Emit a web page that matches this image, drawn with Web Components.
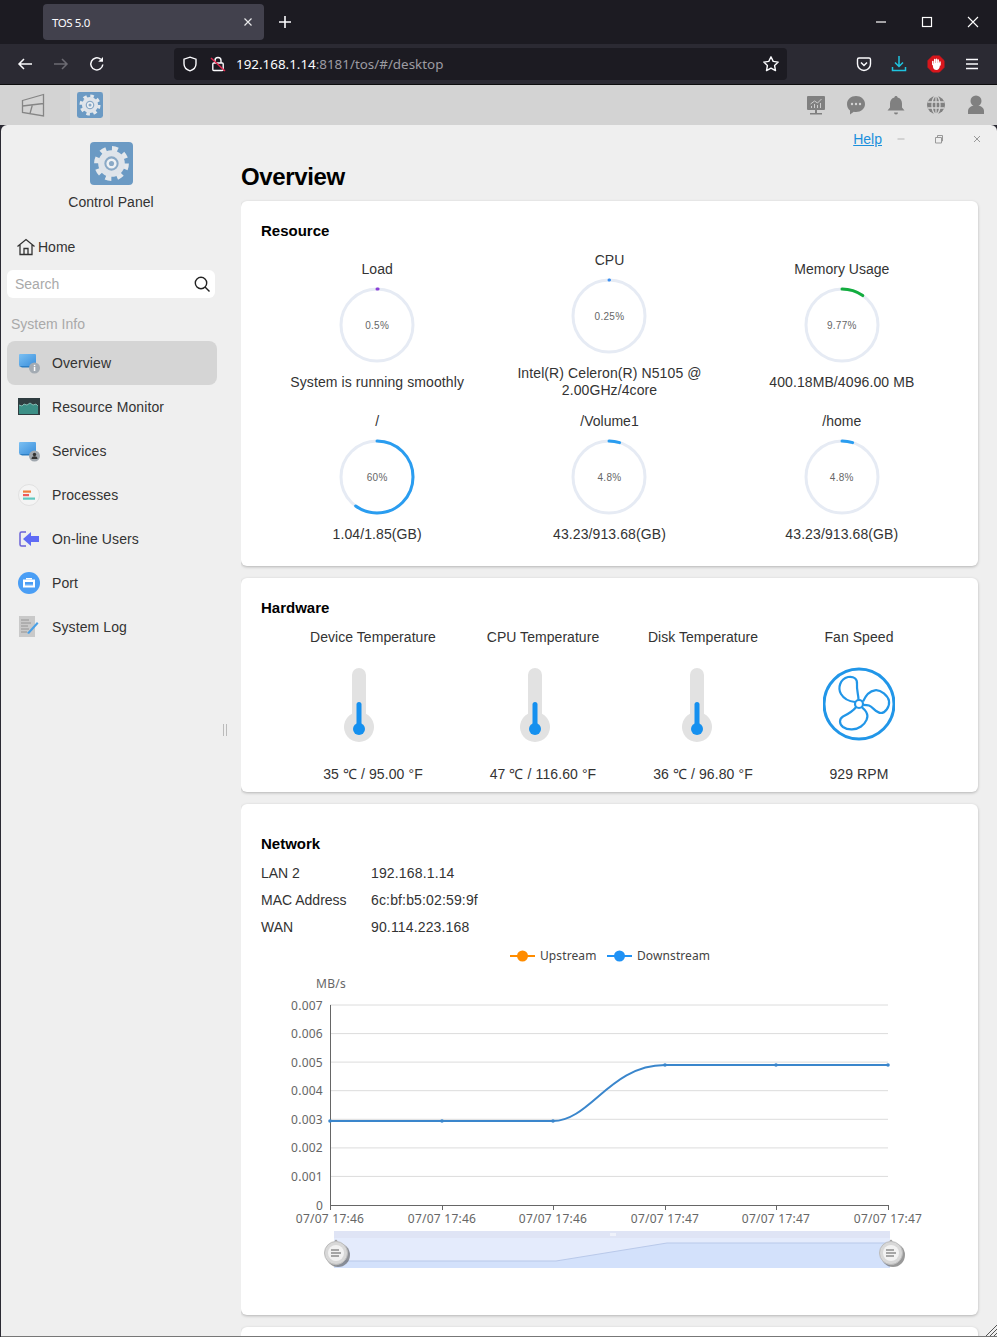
<!DOCTYPE html>
<html lang="en">
<head>
<meta charset="utf-8">
<title>TOS 5.0</title>
<style>
  html, body { margin: 0; padding: 0; width: 997px; height: 1337px; overflow: hidden; background: #2b2a33; }
  body { font-family: "Liberation Sans", Arial, sans-serif; font-size: 14px; color: #333; }
</style>
</head>
<body>
<browser-chrome></browser-chrome>
<tos-taskbar></tos-taskbar>
<app-window>
  <control-sidebar slot="side">
    <nav-item icon="overview" selected>Overview</nav-item>
    <nav-item icon="monitor">Resource Monitor</nav-item>
    <nav-item icon="services">Services</nav-item>
    <nav-item icon="processes">Processes</nav-item>
    <nav-item icon="users">On-line Users</nav-item>
    <nav-item icon="port">Port</nav-item>
    <nav-item icon="log">System Log</nav-item>
  </control-sidebar>

  <info-card heading="Resource">
    <div style="display:grid;grid-template-columns:repeat(3,1fr);row-gap:12px;align-items:center;padding-bottom:22.5px">
      <ring-gauge label="Load" value="0.5" text="0.5%" color="#8a3fd6">System is running smoothly</ring-gauge>
      <ring-gauge label="CPU" value="0.25" text="0.25%" color="#3b8ff0">Intel(R) Celeron(R) N5105 @ 2.00GHz/4core</ring-gauge>
      <ring-gauge label="Memory Usage" value="9.77" text="9.77%" color="#12ad3e">400.18MB/4096.00 MB</ring-gauge>
      <ring-gauge label="/" value="60" text="60%" color="#2a9df0">1.04/1.85(GB)</ring-gauge>
      <ring-gauge label="/Volume1" value="4.8" text="4.8%" color="#2a9df0">43.23/913.68(GB)</ring-gauge>
      <ring-gauge label="/home" value="4.8" text="4.8%" color="#2a9df0">43.23/913.68(GB)</ring-gauge>
    </div>
  </info-card>

  <info-card heading="Hardware">
    <div style="display:grid;grid-template-columns:170px 170px 150px 162px;padding-left:27px;padding-bottom:8.5px">
      <hw-stat label="Device Temperature" shift="29">35 ℃ / 95.00 °F</hw-stat>
      <hw-stat label="CPU Temperature" shift="16">47 ℃ / 116.60 °F</hw-stat>
      <hw-stat label="Disk Temperature" shift="12">36 ℃ / 96.80 °F</hw-stat>
      <hw-stat label="Fan Speed" kind="fan">929 RPM</hw-stat>
    </div>
  </info-card>

  <info-card heading="Network" top="30" tight>
    <net-row label="LAN 2">192.168.1.14</net-row>
    <net-row label="MAC Address">6c:bf:b5:02:59:9f</net-row>
    <net-row label="WAN">90.114.223.168</net-row>
    <net-chart></net-chart>
  </info-card>

  <info-card></info-card>
</app-window>

<script>
class BrowserChrome extends HTMLElement {
  constructor() {
    super();
    this.attachShadow({ mode: "open" });
    this.shadowRoot.innerHTML = `
      <style>
        :host { display: block; height: 85px; font-family: "Noto Sans", "Open Sans", sans-serif; color: #fbfbfe; }
        svg { display: block; flex: none; }
        .tabs { height: 44px; background: #1c1b22; display: flex; align-items: center; padding-left: 43px; box-sizing: border-box; }
        .tab { width: 221px; height: 36px; box-sizing: border-box; background: #42414d; border-radius: 4px; display: flex; align-items: center; padding: 0 8px 0 9px; font-size: 11.5px; letter-spacing: -.4px; }
        .tab span { flex: 1; }
        .new { margin-left: 13px; }
        .win { margin-left: auto; display: flex; padding-right: 16px; }
        .win svg { margin-left: 30px; }
        .tools { height: 40px; background: #2b2a33; border-bottom: 1px solid #0c0c0d; display: flex; align-items: center; }
        .nav { display: flex; align-items: center; width: 174px; padding-left: 17px; box-sizing: border-box; gap: 20px; }
        .url { width: 613px; height: 32px; background: #1c1b22; border-radius: 4px; display: flex; align-items: center; padding: 0 7px 0 8px; box-sizing: border-box; font-size: 13.4px; }
        .url .addr { margin-left: 10px; flex: 1; color: #9c9ca2; }
        .url b { font-weight: 400; color: #fbfbfe; }
        .right { display: flex; align-items: center; margin-left: 69px; gap: 19px; }
      </style>
      <div class="tabs">
        <div class="tab"><span>TOS 5.0</span>
          <svg width="16" height="16" viewBox="0 0 16 16"><path d="M4.5 4.5l7 7M11.5 4.5l-7 7" stroke="#e8e8ea" stroke-width="1.2" fill="none"/></svg>
        </div>
        <svg class="new" width="16" height="16" viewBox="0 0 16 16"><path d="M8 2v12M2 8h12" stroke="#fbfbfe" stroke-width="1.6" fill="none"/></svg>
        <div class="win">
          <svg width="16" height="16" viewBox="0 0 16 16"><path d="M3 8h10" stroke="#fff" stroke-width="1.2"/></svg>
          <svg width="16" height="16" viewBox="0 0 16 16"><rect x="3.5" y="3.5" width="9" height="9" fill="none" stroke="#fff" stroke-width="1.2"/></svg>
          <svg width="16" height="16" viewBox="0 0 16 16"><path d="M3 3l10 10M13 3L3 13" stroke="#fff" stroke-width="1.1"/></svg>
        </div>
      </div>
      <div class="tools">
        <div class="nav">
          <svg width="16" height="16" viewBox="0 0 16 16"><path d="M15 8H2M7 3L2 8l5 5" fill="none" stroke="#fbfbfe" stroke-width="1.5"/></svg>
          <svg width="16" height="16" viewBox="0 0 16 16"><path d="M1 8h13M9 3l5 5-5 5" fill="none" stroke="#6c6b73" stroke-width="1.5"/></svg>
          <svg width="16" height="16" viewBox="0 0 16 16"><path d="M13.8 8.5A6 6 0 1 1 11.6 3.2" fill="none" stroke="#fbfbfe" stroke-width="1.5"/><path d="M14 1v4.8H9.2z" fill="#fbfbfe"/></svg>
        </div>
        <div class="url">
          <svg width="16" height="16" viewBox="0 0 16 16"><path d="M8 1.2l6 2v4.6c0 3.4-2.6 6-6 7-3.4-1-6-3.6-6-7V3.2z" fill="none" stroke="#fbfbfe" stroke-width="1.4"/></svg>
          <svg width="16" height="16" viewBox="0 0 16 16" style="margin-left:12px"><rect x="2.8" y="7" width="10.4" height="7.5" rx="1" fill="none" stroke="#fbfbfe" stroke-width="1.4"/><path d="M5 7V4.5a3 3 0 0 1 6 0V7" fill="none" stroke="#fbfbfe" stroke-width="1.4"/><path d="M1 2l14 13" stroke="#e22850" stroke-width="1.5"/></svg>
          <div class="addr"><b>192.168.1.14</b>:8181/tos/#/desktop</div>
          <svg width="18" height="18" viewBox="0 0 18 18"><path d="M9 1.8l2.2 4.6 5 .7-3.6 3.5.9 5L9 13.2l-4.500 2.400.9-5L1.800 7.100l5-.7z" fill="none" stroke="#fbfbfe" stroke-width="1.4" stroke-linejoin="round"/></svg>
        </div>
        <div class="right">
          <svg width="16" height="16" viewBox="0 0 16 16"><path d="M1.5 3.5a1.5 1.5 0 0 1 1.5-1.5h10a1.5 1.5 0 0 1 1.5 1.5V8a6.5 6.5 0 0 1-13 0z" fill="none" stroke="#fbfbfe" stroke-width="1.4"/><path d="M5 6.5l3 3 3-3" fill="none" stroke="#fbfbfe" stroke-width="1.5"/></svg>
          <svg width="16" height="18" viewBox="0 0 16 18"><path d="M8 1v10M4 7.5l4 4 4-4M1.5 12v3.5h13V12" fill="none" stroke="#1fc4df" stroke-width="1.5"/></svg>
          <svg width="18" height="18" viewBox="0 0 18 18" style="margin-left:1px"><path d="M5.6 1h6.800L17 5.600v6.800L12.400 17H5.600L1 12.400V5.600z" fill="#d8161c" stroke="#d8161c" stroke-linejoin="round"/><path d="M5.800 9.500V6.500M7.700 9V4.600M9.500 9V4.200M11.200 9V5M13 10V7" fill="none" stroke="#fff" stroke-width="1.5" stroke-linecap="round"/><path d="M5.800 9.500l.2 2.500c.3 2 1.600 3 3.300 3 2.200 0 3.400-1.500 3.700-5V8H7z" fill="#fff"/></svg>
          <svg width="16" height="16" viewBox="0 0 16 16"><path d="M2 3.5h12M2 8h12M2 12.5h12" stroke="#fbfbfe" stroke-width="1.5"/></svg>
        </div>
      </div>`;
  }
}

// gear used on the taskbar and as the control panel logo
function gearLogo(size) {
  return `<svg width="${size}" height="${size}" viewBox="0 0 42 42" style="display:block">
    <rect width="42" height="42" rx="4" fill="#6b9ac4"/>
    <circle cx="21" cy="21" r="14.5" fill="none" stroke="#e4e8ec" stroke-width="5" stroke-dasharray="5.7 5.69"/>
    <circle cx="21" cy="21" r="13" fill="#dfe4ea"/>
    <circle cx="21" cy="21" r="6" fill="#eef1f4" stroke="#8aa9c6" stroke-width="2"/>
    <circle cx="21" cy="21" r="2.5" fill="#8aa9c6"/>
  </svg>`;
}

class TosTaskbar extends HTMLElement {
  constructor() {
    super();
    this.attachShadow({ mode: "open" });
    this.shadowRoot.innerHTML = `
      <style>
        :host { display: flex; align-items: center; height: 40px; background: #d3d3d3; }
        svg { display: block; }
        .start { margin-left: 21px; width: 49px; }
        .app { width: 40px; height: 40px; background: #dadada; display: flex; align-items: center; justify-content: center; }
        .right { margin-left: auto; display: flex; align-items: center; gap: 14px; padding-right: 8px; }
        .right svg { fill: #808080; }
      </style>
      <div class="start"><svg width="24" height="24" viewBox="0 0 24 24"><path d="M1.5 7.5L22.5 1.5V23L1.5 19.5zM1.5 13l21-2.500M11.500 11.500l-2.500 9" fill="none" stroke="#858585" stroke-width="1.3"/></svg></div>
      <div class="app">${gearLogo(26)}</div>
      <div class="right">
        <svg width="26" height="26" viewBox="0 0 26 26"><rect x="4" y="4" width="18" height="14" rx="1"/><rect x="12" y="18" width="2" height="3"/><rect x="7" y="21" width="12" height="1.5"/><path d="M7.5 12l4-3 3 2 4-4" fill="none" stroke="#ccc" stroke-width="1"/><path d="M8 16v-2h1v2zM11 16v-4h1v4zM14 16v-3h1v3zM17 16v-5h1v5z" fill="#ccc"/></svg>
        <svg width="26" height="26" viewBox="0 0 26 26"><path d="M13 4c5 0 9 3.5 9 8s-4 8-9 8c-.8 0-1.5-.1-2.2-.2L7 22.500v-4C5 17 4 14.700 4 12c0-4.500 4-8 9-8z"/><circle cx="9" cy="12" r="1.2" fill="#d3d3d3"/><circle cx="13" cy="12" r="1.2" fill="#d3d3d3"/><circle cx="17" cy="12" r="1.2" fill="#d3d3d3"/></svg>
        <svg width="26" height="26" viewBox="0 0 26 26"><path d="M13 4c.9 0 1.500.6 1.600 1.400 3 .7 4.400 3 4.400 6v4l2.500 3.100H4.500L7 15.400v-4c0-3 1.400-5.300 4.400-6C11.500 4.600 12.100 4 13 4z"/><path d="M11 20.500h4a2 2 0 0 1-4 0z"/></svg>
        <svg width="26" height="26" viewBox="0 0 26 26"><circle cx="13" cy="13" r="9"/><g fill="none" stroke="#d3d3d3" stroke-width="1.3"><ellipse cx="13" cy="13" rx="4" ry="9"/><path d="M4.5 10h17M4.5 16h17M13 4v18"/></g></svg>
        <svg width="26" height="26" viewBox="0 0 26 26"><circle cx="13" cy="9" r="5.5"/><path d="M5 22v-3c0-3 3-5 5-5h6c2 0 5 2 5 5v3z"/></svg>
      </div>`;
  }
}

class AppWindow extends HTMLElement {
  constructor() {
    super();
    this.attachShadow({ mode: "open" });
    this.shadowRoot.innerHTML = `
      <style>
        :host { display: flex; height: 1212px; margin-left: 1px; background: #efefef; border-radius: 6px 6px 0 0; border-bottom: 1px solid #777; box-sizing: border-box; overflow: hidden; position: relative; }
        .side { width: 240px; flex: none; }
        main { width: 756px; flex: none; height: 100%; overflow: hidden; }
        .bar { height: 26px; display: flex; align-items: center; justify-content: flex-end; padding: 1px 14px 0 0; }
        .bar a { color: #1b8fdc; text-decoration: underline; font-size: 14px; margin-right: 13px; }
        .bar svg { display: block; margin-left: 26px; }
        .bar a + svg { margin-left: 0; }
        h1 { margin: 0; height: 49px; box-sizing: border-box; padding-top: 10px; font-size: 24px; line-height: 30px; color: #000; font-weight: 700; letter-spacing: -.35px; }
        .cards { display: flex; flex-direction: column; gap: 12px; width: 737px; }
        .grip { position: absolute; right: 0; bottom: 0; }
      </style>
      <div class="side"><slot name="side"></slot></div>
      <main>
        <div class="bar">
          <a>Help</a>
          <svg width="12" height="12" viewBox="0 0 12 12"><path d="M2.5 6h7" stroke="#b5b5b5"/></svg>
          <svg width="12" height="12" viewBox="0 0 12 12"><path d="M2.5 4.5h6v5.5h-6zM4.5 4.5V2.5h5v5.5h-1" fill="none" stroke="#999"/></svg>
          <svg width="12" height="12" viewBox="0 0 12 12"><path d="M3 3l6 6M9 3l-6 6" stroke="#999"/></svg>
        </div>
        <h1>Overview</h1>
        <div class="cards"><slot></slot></div>
      </main>
      <svg class="grip" width="12" height="12" viewBox="0 0 12 12"><path d="M12 1L1 12M12 5l-7 7M12 9l-3 3" stroke="#555" stroke-width="1"/></svg>`;
  }
}

class ControlSidebar extends HTMLElement {
  constructor() {
    super();
    this.attachShadow({ mode: "open" });
    this.shadowRoot.innerHTML = `
      <style>
        :host { display: block; height: 100%; position: relative; font-size: 14px; color: #333; }
        .logo { display: flex; flex-direction: column; align-items: center; padding-top: 17px; width: 220px; }
        .logo div { margin-top: 9px; line-height: 16px; letter-spacing: .05px; }
        .home { display: flex; align-items: center; margin: 27px 0 0 15px; height: 20px; gap: 2px; }
        .search { margin: 13px 0 0 6px; width: 208px; height: 28px; background: #fff; border-radius: 6px; box-sizing: border-box; display: flex; align-items: center; justify-content: space-between; padding: 0 4px 0 8px; color: #a9a9a9; }
        .group { margin: 18px 0 9px 10px; color: #a9a9a9; line-height: 16px; }
        .items { margin-left: 6px; width: 210px; }
        .drag { position: absolute; left: 222px; top: 599px; width: 2px; height: 12px; border-left: 1px solid #bbb; border-right: 1px solid #bbb; }
        svg { display: block; }
      </style>
      <div class="logo">${gearLogo(43)}<div>Control Panel</div></div>
      <div class="home">
        <svg width="20" height="20" viewBox="0 0 20 20" fill="none" stroke="#333" stroke-width="1.3"><path d="M1.5 9.5L10 2.5l8.5 7M4 8v9.5h12V8M8 17.5v-6h4v6M8 11.5h4"/></svg>
        <span>Home</span>
      </div>
      <div class="search"><span>Search</span>
        <svg width="18" height="18" viewBox="0 0 18 18" fill="none" stroke="#222" stroke-width="1.4"><circle cx="8" cy="8" r="5.7"/><path d="M12 12l4.5 4.5"/></svg>
      </div>
      <div class="group">System Info</div>
      <div class="items"><slot></slot></div>
      <div class="drag"></div>`;
  }
}

const SCREEN = `<defs><linearGradient id="s" x1="0" y1="0" x2="1" y2="1"><stop offset="0" stop-color="#7cc0f2"/><stop offset="1" stop-color="#3a8fdc"/></linearGradient></defs>
  <rect x="1" y="2" width="17" height="12" rx="1" fill="url(#s)"/><path d="M1 14h17v1.5H4z" fill="#2d7fc4"/>`;

const NAV_ICONS = {
  overview: `${SCREEN}<circle cx="16.5" cy="16" r="5.5" fill="#a3abb3"/><rect x="15.8" y="15" width="1.5" height="4" fill="#fff"/><rect x="15.8" y="12.8" width="1.5" height="1.4" fill="#fff"/>`,
  monitor: `<rect x="0" y="2" width="22" height="17" fill="#2f3d40"/><path d="M1 9l3 1 2-2 3 1 3-2 3 2 3-1 2 2v8H1z" fill="#3c8f86"/><path d="M1 9l3 1 2-2 3 1 3-2 3 2 3-1 2 2" fill="none" stroke="#a6d8d0" stroke-width=".7"/>`,
  services: `${SCREEN}<circle cx="16.5" cy="16" r="5.5" fill="#a0a7ae"/><circle cx="16.5" cy="14.5" r="1.7" fill="#333"/><path d="M13.5 19c0-2 1.5-2.7 3-2.7s3 .7 3 2.7z" fill="#333"/>`,
  processes: `<circle cx="11" cy="11" r="10.5" fill="#f4f4f4" stroke="#dcdcdc" stroke-width=".8"/><rect x="5" y="6.5" width="8" height="2.2" fill="#f07f3c"/><rect x="5" y="10" width="6" height="2.2" fill="#ef5b5b"/><rect x="5" y="13.5" width="12" height="2.2" fill="#5fc8c0"/>`,
  users: `<path d="M8 4H3.5C2.5 4 2 4.5 2 5.5v11c0 1 .5 1.5 1.5 1.5H8" fill="none" stroke="#6b63d8" stroke-width="1.5"/><path d="M5 11l8-7v4h8v6h-8v4z" fill="#5f6bf5"/>`,
  port: `<circle cx="11" cy="11" r="11" fill="#4a9ef5"/><path d="M5 7.5h12v8H5z" fill="#fff"/><path d="M8 7.5V6h6v1.5z" fill="#fff"/><path d="M7 10h8v3.5H7z" fill="#4a9ef5"/><path d="M8 13.5v-1M10 13.5v-1M12 13.5v-1M14 13.5v-1" stroke="#fff" stroke-width=".8"/>`,
  log: `<rect x="1" y="0" width="16" height="21" fill="#c9c9c9"/><path d="M3 4h8M3 7h10M3 10h7M3 13h8M3 16h6" stroke="#8f8f8f" stroke-width=".9"/><path d="M9 17l10-11 1.5 1.5L11 18z" fill="#4aa0e6"/>`
};

class NavItem extends HTMLElement {
  constructor() {
    super();
    this.attachShadow({ mode: "open" });
    const icon = NAV_ICONS[this.getAttribute("icon")] || "";
    this.shadowRoot.innerHTML = `
      <style>
        :host { display: flex; align-items: center; height: 44px; padding-left: 11px; border-radius: 8px; font-size: 14px; color: #333; gap: 12px; letter-spacing: .1px; }
        :host([selected]) { background: #d5d5d5; }
        svg { display: block; flex: none; }
      </style>
      <svg width="22" height="22" viewBox="0 0 22 22">${icon}</svg>
      <slot></slot>`;
  }
}

class InfoCard extends HTMLElement {
  constructor() {
    super();
    this.attachShadow({ mode: "open" });
    const heading = this.getAttribute("heading");
    const top = this.getAttribute("top") || 20;
    const gap = this.hasAttribute("tight") ? 6 : 9;
    this.shadowRoot.innerHTML = `
      <style>
        :host { display: block; flex: none; background: #fff; border-radius: 6px; box-shadow: 0 1px 3px rgba(0,0,0,.25); padding: ${top}px 20px 0; }
        :host(:not([heading])) { min-height: 60px; }
        h2 { margin: 0 0 ${gap}px; font-size: 15px; line-height: 20px; font-weight: 700; color: #000; }
      </style>
      ${heading ? `<h2>${heading}</h2>` : ""}
      <slot></slot>`;
  }
}

class RingGauge extends HTMLElement {
  constructor() {
    super();
    this.attachShadow({ mode: "open" });
    const value = parseFloat(this.getAttribute("value"));
    const r = 36;
    const len = 2 * Math.PI * r;
    const arc = Math.max(value / 100 * len, 0.01);
    this.shadowRoot.innerHTML = `
      <style>
        :host { display: flex; flex-direction: column; align-items: center; text-align: center; font-size: 14px; color: #333; }
        .t { line-height: 20px; margin-bottom: 8px; }
        .ring { display: grid; width: 76px; height: 76px; place-items: center; }
        .ring > * { grid-area: 1 / 1; }
        .ring span { font-size: 10px; color: #666; padding-top: 1px; letter-spacing: .3px; }
        .c { margin-top: 11px; line-height: 17px; width: 200px; letter-spacing: .1px; }
        svg { display: block; }
      </style>
      <div class="t">${this.getAttribute("label")}</div>
      <div class="ring">
        <svg width="76" height="76" viewBox="0 0 76 76">
          <circle cx="38" cy="38" r="${r}" fill="none" stroke="#e6ebf4" stroke-width="3"/>
          <circle cx="38" cy="38" r="${r}" fill="none" stroke="${this.getAttribute("color")}" stroke-width="3" stroke-linecap="round"
            stroke-dasharray="${arc} ${len}" transform="rotate(-90 38 38)"/>
        </svg>
        <span>${this.getAttribute("text")}</span>
      </div>
      <div class="c"><slot></slot></div>`;
  }
}

class HwStat extends HTMLElement {
  constructor() {
    super();
    this.attachShadow({ mode: "open" });
    const fan = this.getAttribute("kind") === "fan";
    const shift = this.getAttribute("shift") || 0;
    const art = fan
      ? `<g transform="translate(36 37)" fill="none" stroke="#2196e8" stroke-linejoin="round">
           <circle r="35" stroke-width="3"/>
           <g stroke-width="2.2">
             <circle r="4"/>
             <path d="M-4 -2C-9 -2.5 -15 -5 -18 -10C-21.5 -16 -19 -25 -11 -27C-5 -28 -1.5 -25 -2 -20C-2.5 -14 -.5 -9 -.5 -4.2"/>
             <path d="M4 -2.5C6 -7 10 -13 16 -13.7C22 -14.5 29 -8 30 -3C31 3 26 9 22 9C17 9 14 3 10 1.5C8 .8 6 .8 4.2 .8"/>
             <path d="M-3 3.2C-6 7 -12 10.5 -16 12.5C-20 15 -20 20 -16 23C-11 26.5 -3 26 2 22.5C7 19 10 13 7.5 8.5C6.5 6.5 5 5 3 3.4"/>
           </g>
         </g>`
      : `<g transform="translate(36 0)">
           <path d="M-7 8a7 7 0 0 1 14 0v38.7a15 15 0 1 1-14 0z" fill="#e2e2e2"/>
           <rect x="-2.5" y="35" width="5" height="27" rx="2.5" fill="#1590ef"/>
           <circle cy="62" r="6" fill="#1590ef"/>
         </g>`;
    this.shadowRoot.innerHTML = `
      <style>
        :host { display: flex; flex-direction: column; align-items: center; font-size: 14px; color: #333; white-space: nowrap; }
        .t { line-height: 20px; letter-spacing: .05px; }
        svg { display: block; margin: 20px ${shift}px 23.5px 0; }
        .v { line-height: 17px; letter-spacing: .1px; }
      </style>
      <div class="t">${this.getAttribute("label")}</div>
      <svg width="72" height="76" viewBox="0 0 72 76">${art}</svg>
      <div class="v"><slot></slot></div>`;
  }
}

class NetRow extends HTMLElement {
  constructor() {
    super();
    this.attachShadow({ mode: "open" });
    this.shadowRoot.innerHTML = `
      <style>
        :host { display: flex; height: 27px; align-items: center; font-size: 14px; color: #333; letter-spacing: .15px; }
        span { width: 110px; flex: none; letter-spacing: 0; }
      </style>
      <span>${this.getAttribute("label")}</span><slot></slot>`;
  }
}

class NetChart extends HTMLElement {
  constructor() {
    super();
    this.attachShadow({ mode: "open" });
    // svg uses the coordinates of the page, easier to read against the screenshot
    const x0 = 330, x1 = 888, y0 = 1205, step = 200 / 7;
    let grid = "";
    for (let i = 0; i <= 7; i++) {
      const y = +(y0 - i * step).toFixed(1);
      if (i > 0) grid += `<path d="M${x0} ${y}H${x1}" stroke="#dcdcdc"/>`;
      grid += `<text x="323" y="${y + 4.5}" text-anchor="end">${i === 0 ? "0" : (i / 1000).toFixed(3)}</text>`;
    }
    const xs = [330, 442, 553, 665, 776, 888];
    const labels = ["17:46", "17:46", "17:46", "17:47", "17:47", "17:47"];
    let ticks = "", dots = "";
    xs.forEach((x, i) => {
      ticks += `<path d="M${x + .5} 1205v5" stroke="#666"/>`;
      ticks += `<text x="${x}" y="1222.5" text-anchor="middle">07/07 ${labels[i]}</text>`;
      dots += `<circle cx="${x}" cy="${i < 3 ? 1121 : 1065}" r="1.8" fill="#3a86cc"/>`;
    });
    const handle = (cx) => `
      <g transform="translate(${cx} 1253)">
        <circle cx="2" cy="2" r="12" fill="#555" opacity=".6"/>
        <path d="M-2 -11.5L0 -13.5L2 -11.5M-2 11.5L0 13.5L2 11.5" fill="#999"/>
        <circle r="11.5" fill="#d8d8d8" stroke="#bcbcbc"/>
        <circle r="8" fill="#f2f2f2"/>
        <path d="M-5 -3h8M-5 0h10M-5 3h8" stroke="#8d8d8d" stroke-width="1.5"/>
      </g>`;
    this.shadowRoot.innerHTML = `
      <style>
        :host { display: block; margin: 0 -20px 20px; }
        svg { display: block; }
        text { font-family: "Noto Sans", "Open Sans", sans-serif; font-size: 12px; fill: #666; letter-spacing: .25px; }
        .leg { fill: #444; letter-spacing: .1px; }
      </style>
      <svg width="737" height="354" viewBox="241 941 737 354">
        <path d="M510 956h25" stroke="#ff8c00" stroke-width="2"/><circle cx="522.5" cy="956" r="5.5" fill="#ff8c00"/>
        <text class="leg" x="540" y="960">Upstream</text>
        <path d="M607 956h25" stroke="#2092f5" stroke-width="2"/><circle cx="619.5" cy="956" r="5.5" fill="#2092f5"/>
        <text class="leg" x="637" y="960">Downstream</text>
        <text x="316" y="988">MB/s</text>
        ${grid}
        <path d="M330.5 1005V1205M330 1205.5H888.5" fill="none" stroke="#666"/>
        ${ticks}
        <path d="M330 1121H553C590 1121 610 1065 665 1065H888" fill="none" stroke="#3a86cc" stroke-width="2"/>
        ${dots}
        <rect x="334" y="1231" width="556" height="7" fill="#dfe4f5"/>
        <rect x="334" y="1238" width="556" height="30" fill="#e4ebfc"/>
        <path d="M334 1261H556L667 1243H890V1268H334z" fill="#d3e1fb"/>
        <path d="M334 1261H556L667 1243H890" fill="none" stroke="#b9c9ea"/>
        <path d="M611 1233v3M613 1233v3M615 1233v3" stroke="#fff"/>
        ${handle(336)}${handle(891)}
      </svg>`;
  }
}

customElements.define("browser-chrome", BrowserChrome);
customElements.define("tos-taskbar", TosTaskbar);
customElements.define("app-window", AppWindow);
customElements.define("control-sidebar", ControlSidebar);
customElements.define("nav-item", NavItem);
customElements.define("info-card", InfoCard);
customElements.define("ring-gauge", RingGauge);
customElements.define("hw-stat", HwStat);
customElements.define("net-row", NetRow);
customElements.define("net-chart", NetChart);
</script>
</body>
</html>
